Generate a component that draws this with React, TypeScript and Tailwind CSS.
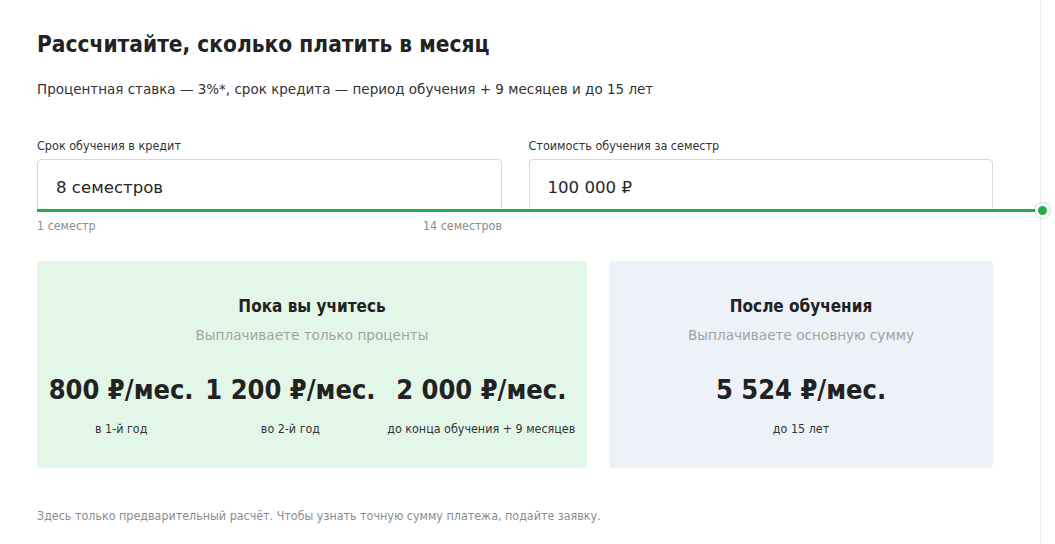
const font = { fontFamily: '"DejaVu Sans", "Noto Sans", sans-serif' };

type Pay = { value: string; note: string };

const during: Pay[] = [
  { value: "800 ₽/мес.", note: "в 1-й год" },
  { value: "1 200 ₽/мес.", note: "во 2-й год" },
  { value: "2 000 ₽/мес.", note: "до конца обучения + 9 месяцев" },
];

function Field({ label, value }: { label: string; value: string }) {
  return (
    <div className="flex flex-1 flex-col">
      <span className="text-[12.5px] leading-[16px] text-[#333] font-['DejaVu_Sans_Condensed',sans-serif]">{label}</span>
      <div className="mt-[5px] flex h-[53px] items-center rounded-[4px] border border-[#d9d9d9] bg-white px-[18px] pt-[6px]">
        <span className="text-[16.6px] text-[#262626]">{value}</span>
      </div>
    </div>
  );
}

function Card({
  title,
  subtitle,
  items,
  tone,
}: {
  title: string;
  subtitle: string;
  items: Pay[];
  tone: string;
}) {
  return (
    <div className={`flex h-[207px] flex-col items-center rounded-[4px] pt-[33px] ${tone}`}>
      <h3 className="text-[17px] leading-[24px] font-bold text-[#222] font-['DejaVu_Sans_Condensed',sans-serif]">{title}</h3>
      <p className="mt-[7px] text-[13.6px] leading-[20px] text-[#a3a3a3]">{subtitle}</p>
      <div className="mt-[29px] flex w-full justify-evenly">
        {items.map((it) => (
          <div key={it.value} className="flex flex-col items-center">
            <span className="text-[27px] leading-[32px] font-bold text-[#222] whitespace-nowrap font-['DejaVu_Sans_Condensed',sans-serif]">
              {it.value}
            </span>
            <span className="mt-[15px] text-[12.4px] leading-[16px] text-[#333] whitespace-nowrap font-['DejaVu_Sans_Condensed',sans-serif]">
              {it.note}
            </span>
          </div>
        ))}
      </div>
    </div>
  );
}

export default function App() {
  return (
    <div className="flex min-h-[544px] bg-white" style={font}>
      <div className="w-[1041px] shrink-0 border-r border-[#e7e9ef] pl-[37px] pr-[47px] pt-[30px]">
        <h2 className="text-[22.5px] leading-[28px] font-bold text-[#222] font-['DejaVu_Sans_Condensed',sans-serif]">
          Рассчитайте, сколько платить в месяц
        </h2>
        <p className="mt-[21px] text-[13.5px] leading-[20px] text-[#333]">
          Процентная ставка — 3%*, срок кредита — период обучения + 9 месяцев и до 15 лет
        </p>

        <div className="mt-[39px] flex gap-[27px]">
          <Field label="Срок обучения в кредит" value="8 семестров" />
          <Field label="Стоимость обучения за семестр" value="100 000 ₽" />
        </div>

        <div className="relative mr-[-47px] mt-[-3px] h-[3px] bg-[#26ad4a]">
          <span className="absolute right-[-10px] top-[-6px] flex h-[15px] w-[15px] items-center justify-center rounded-full bg-white shadow-[0_0_3px_rgba(0,0,0,0.3)]">
            <span className="h-[9px] w-[9px] rounded-full bg-[#26ad4a]" />
          </span>
        </div>

        <div className="mt-[6px] flex w-[465px] justify-between text-[12.4px] leading-[16px] text-[#8c8c8c] font-['DejaVu_Sans_Condensed',sans-serif]">
          <span>1 семестр</span>
          <span>14 семестров</span>
        </div>

        <div className="mt-[27px] flex gap-[22px]">
          <div className="w-[550px]">
            <Card title="Пока вы учитесь" subtitle="Выплачиваете только проценты" items={during} tone="bg-[#e3f7e8]" />
          </div>
          <div className="flex-1">
            <Card
              title="После обучения"
              subtitle="Выплачиваете основную сумму"
              items={[{ value: "5 524 ₽/мес.", note: "до 15 лет" }]}
              tone="bg-[#edf1f8]"
            />
          </div>
        </div>

        <p className="mt-[40px] text-[12.4px] leading-[16px] text-[#8c8c8c] font-['DejaVu_Sans_Condensed',sans-serif]">
          Здесь только предварительный расчёт. Чтобы узнать точную сумму платежа, подайте заявку.
        </p>
      </div>
    </div>
  );
}
